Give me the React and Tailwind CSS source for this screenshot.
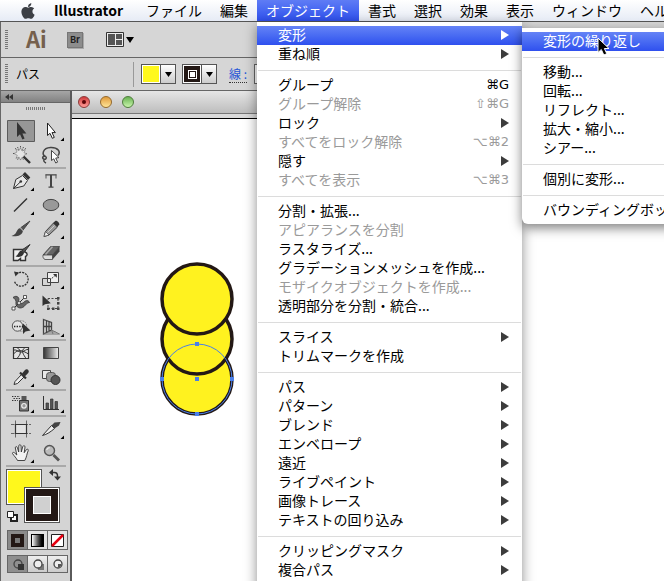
import { useState } from 'react'
import { FaApple } from 'react-icons/fa'

const MENU_TITLES = ['ファイル', '編集', 'オブジェクト', '書式', '選択', '効果', '表示', 'ウィンドウ', 'ヘルプ']

const OBJECT_MENU = [
  [
    { label: '変形', submenu: true },
    { label: '重ね順', submenu: true },
  ],
  [
    { label: 'グループ', shortcut: '⌘G' },
    { label: 'グループ解除', shortcut: '⇧⌘G', disabled: true },
    { label: 'ロック', submenu: true },
    { label: 'すべてをロック解除', shortcut: '⌥⌘2', disabled: true },
    { label: '隠す', submenu: true },
    { label: 'すべてを表示', shortcut: '⌥⌘3', disabled: true },
  ],
  [
    { label: '分割・拡張...' },
    { label: 'アピアランスを分割', disabled: true },
    { label: 'ラスタライズ...' },
    { label: 'グラデーションメッシュを作成...' },
    { label: 'モザイクオブジェクトを作成...', disabled: true },
    { label: '透明部分を分割・統合...' },
  ],
  [{ label: 'スライス', submenu: true }, { label: 'トリムマークを作成' }],
  [
    { label: 'パス', submenu: true },
    { label: 'パターン', submenu: true },
    { label: 'ブレンド', submenu: true },
    { label: 'エンベロープ', submenu: true },
    { label: '遠近', submenu: true },
    { label: 'ライブペイント', submenu: true },
    { label: '画像トレース', submenu: true },
    { label: 'テキストの回り込み', submenu: true },
  ],
  [
    { label: 'クリッピングマスク', submenu: true },
    { label: '複合パス', submenu: true },
  ],
]

const TRANSFORM_MENU = [
  [{ label: '変形の繰り返し' }],
  [
    { label: '移動...' },
    { label: '回転...' },
    { label: 'リフレクト...' },
    { label: '拡大・縮小...' },
    { label: 'シアー...' },
  ],
  [{ label: '個別に変形...' }],
  [{ label: 'バウンディングボックスの初期化' }],
]

const ARROW = 'M11 3V18L14 15.3L16.4 20.4L18.6 19.4L16.4 14.4H20.4Z'

// every drawing sits in a 30x24 cell
const TOOL_GROUPS = [
  [
    { name: '選択ツール', art: <path d={ARROW} fill="#333" /> },
    {
      name: 'ダイレクト選択ツール',
      more: true,
      art: <path d="M11.5 4V16.5L14 14.3L16.3 19.3L18.3 18.4L16 13.6H19.4Z" fill="#fff" stroke="#222" />,
    },
    {
      name: '自動選択ツール',
      art: (
        <>
          <path d="M14.5 3v15M7 10.5h15M9.2 5.2l10.6 10.6M19.8 5.2L9.2 15.8M11.5 4l6 13M17.5 4l-6 13" stroke="#555" strokeDasharray="1.5 1" />
          <path d="M14.5 5l1.6 3 3.2-1.4-1.3 3.2 3 1-3 1.6 1.2 3-3.1-1.2-1.6 2.9-1.4-3-3 1.2 1.2-3L8 10.5l3-1.4L9.8 6l3.2 1.6z" fill="#e4e4e4" stroke="#777" strokeWidth="0.6" />
          <path d="M17.5 13.5L24 20" stroke="#333" strokeWidth="2.4" />
        </>
      ),
    },
    {
      name: 'なげなわツール',
      art: (
        <>
          <path d="M9.5 13.5C5.5 11.5 6.5 5 14.5 4.5C22 4.2 25 9 22 12.5M9.5 13.5c-2.5-1-3.8 1.5-2 2.5s4-1 2-2.5zM8.5 16.5c-1.5 1-.5 2.5 1.5 3.5" stroke="#444" strokeWidth="1.5" />
          <path d="M15.5 7.5V17.5L17.8 15.8L19.7 20L21.6 19.1L19.7 15.1L23 14.6Z" fill="#fff" stroke="#333" strokeWidth="0.9" />
        </>
      ),
    },
  ],
  [
    {
      name: 'ペンツール',
      more: true,
      art: (
        <>
          <path d="M7.5 19.5L9.8 10.5L16.5 6.5L21.5 11.5L17.8 17L7.5 19.5Z" fill="#e6e6e6" stroke="#333" />
          <path d="M7.5 19.5L14.5 12.8" stroke="#333" />
          <circle cx="14.8" cy="12.5" r="1.3" fill="#333" />
          <path d="M16.5 5.5L19 3L24.3 8.5L22 11Z" fill="#333" />
        </>
      ),
    },
    {
      name: '文字ツール',
      more: true,
      art: (
        <>
          <path d="M9.5 5.9H20.5M15 6V18M12.5 18.2H17.500" stroke="#444" strokeWidth="1.200" />
          <path d="M15 6V18" stroke="#444" strokeWidth="2" />
          <path d="M10 5.500V9.500M20 5.500V9.500" stroke="#555" />
        </>
      ),
    },
    { name: '直線ツール', more: true, art: <path d="M8 18.5L21 5.5" stroke="#333" strokeWidth="1.4" /> },
    { name: '楕円形ツール', more: true, art: <ellipse cx="15" cy="12" rx="7.8" ry="5.6" fill="#999" stroke="#444" /> },
    {
      name: 'ブラシツール',
      art: (
        <>
          <path d="M24 4L15 10.5L17 13Z" fill="#555" stroke="#444" />
          <path d="M15 11C11.5 11 11 14.5 9.5 16.5C8.5 17.8 7 18.5 5.5 19C9 19.8 16.5 19.5 17 13.5Z" fill="#444" />
          <path d="M14.5 11L17.3 13.8" stroke="#aaa" strokeWidth="1.2" />
        </>
      ),
    },
    {
      name: '鉛筆ツール',
      more: true,
      art: (
        <>
          <path d="M8 19.5L9.5 14.5L17.5 6L21.5 10L13 18Z" fill="#999" stroke="#444" />
          <path d="M17 6L19.5 3.8C21 3.5 23.5 5.8 23.3 7.5L21.2 10Z" fill="#333" />
          <path d="M9.5 14.5L13 18L8 19.5Z" fill="#eee" stroke="#444" strokeWidth="0.7" />
          <path d="M11.5 15.5L18.5 8.5" stroke="#ccc" />
        </>
      ),
    },
    {
      name: '塗りブラシツール',
      art: (
        <>
          <path d="M7.5 8.5H19V11C22 12 21.5 14.5 19.5 15.5V19.5H14.5V17.5L12 19.5H7.5Z" fill="#eee" stroke="#333" strokeWidth="1.4" />
          <path d="M24 3.5L16 9L18 11.5Z" fill="#555" stroke="#333" />
          <path d="M16 9.5C12.5 9.5 13 13.5 9.5 15.5C13 16.5 17.5 15.8 18 11.5Z" fill="#333" />
        </>
      ),
    },
    {
      name: '消しゴムツール',
      more: true,
      art: (
        <>
          <path d="M7 14L14.5 5.5H23.5L16.5 14Z" fill="#666" stroke="#444" strokeWidth="0.8" />
          <path d="M7 14H16.5V18.5H9C7.5 18 6.5 16 7 14Z" fill="#ddd" stroke="#444" strokeWidth="0.8" />
          <path d="M16.5 14L23.5 5.5V10.5L16.5 18.5Z" fill="#444" />
          <path d="M9.5 13.500L16.5 5.800" stroke="#aaa" strokeWidth="1.500" />
        </>
      ),
    },
  ],
  [
    {
      name: '回転ツール',
      more: true,
      art: (
        <>
          <path d="M10.5 7A7 7 0 1 1 8.5 14.5" stroke="#333" strokeWidth="1.3" strokeDasharray="2 1" />
          <path d="M8 4.5L13 5.5L9.5 9.5Z" fill="#333" />
        </>
      ),
    },
    {
      name: '拡大・縮小ツール',
      more: true,
      art: (
        <>
          <path d="M11.5 5.5H22.5V15.5H11.5Z" fill="#eee" stroke="#444" />
          <path d="M6.5 11.5H14.5V18.5H6.5Z" stroke="#444" />
          <path d="M14 13L19 8.5" stroke="#333" strokeDasharray="1.5 1" />
          <path d="M17 7H20.8V10.8Z" fill="#333" />
        </>
      ),
    },
    {
      name: '線幅ツール',
      more: true,
      art: (
        <>
          <path d="M7 6.5C11 3.5 14 7 12.5 10C11.5 12.5 15 14 17.5 11.5C19.5 9.5 22 8.5 23.5 11.5C21 11.5 20 13.5 18 15.5C14.5 18.5 9.5 16.5 10 12C10.3 9.5 9.5 8 7 6.5Z" fill="#666" stroke="#444" />
          <path d="M7.5 17.5L19 6" stroke="#333" />
          <path d="M6 16H9V19H6ZM17.5 4.5H20.5V7.5H17.5Z" fill="#fff" stroke="#333" strokeWidth="0.8" />
          <circle cx="13" cy="12" r="1.5" fill="#fff" stroke="#333" strokeWidth="0.7" />
        </>
      ),
    },
    {
      name: '自由変形ツール',
      art: (
        <>
          <path d="M12 7.5H22V17.5H12Z" stroke="#444" strokeDasharray="2 1.5" />
          <path d="M21 6H23.5V8.5H21ZM21 16.5H23.5V19H21ZM11 16.5H13.5V19H11ZM16 16.5H18.5V19H16ZM21 11H23.5V13.5H21Z" fill="#444" />
          <path d="M6.5 4.5V15L9 13.3L14.8 12.2Z" fill="#333" />
        </>
      ),
    },
    {
      name: 'シェイプ形成ツール',
      more: true,
      art: (
        <>
          <path d="M14 6A5.2 5.2 0 1 1 14 16" fill="#ddd" stroke="#777" strokeDasharray="1.5 1" />
          <circle cx="11.5" cy="11" r="5.2" fill="#eee" fillOpacity="0.6" stroke="#555" />
          <path d="M8 11.5H18" stroke="#222" strokeWidth="1.4" strokeDasharray="1.4 1.2" />
          <path d="M17 8.5V19L19.5 16.5L24.5 15.5Z" fill="#333" />
        </>
      ),
    },
    {
      name: '遠近グリッドツール',
      more: true,
      art: (
        <>
          <path d="M7.5 4.5L15.5 7.5V15L7.5 19ZM7.5 11.5H15.5M10.5 5.8V17.5M13 6.8V16" stroke="#444" strokeWidth="1.3" />
          <path d="M15.5 15L23.5 19H7.5M12 17H19.5M15.5 15L17 19" stroke="#777" />
        </>
      ),
    },
  ],
  [
    {
      name: 'メッシュツール',
      art: (
        <>
          <path d="M7.5 6.5H22.5V17.5H7.5Z" fill="#e4e4e4" stroke="#333" strokeWidth="1.2" />
          <path d="M7.5 13C12 8 16 9 22.5 13M11 6.5C16 10 15 13 11 17.5M19 6.5C14 10 18 14 20 17.5M7.5 9C11 8 13 12 16 11S20 8 22.5 8.5" stroke="#333" />
        </>
      ),
    },
    {
      name: 'グラデーションツール',
      art: (
        <>
          <defs>
            <linearGradient id="tool-gradient">
              <stop offset="0" stopColor="#333" />
              <stop offset="1" stopColor="#eee" />
            </linearGradient>
          </defs>
          <path d="M7.5 6.5H22.5V17.5H7.5Z" fill="url(#tool-gradient)" stroke="#444" />
        </>
      ),
    },
    {
      name: 'スポイトツール',
      more: true,
      art: (
        <>
          <path d="M8 19.5L9 16.5L15.5 9.5L18 12L11.5 18.5Z" fill="#eee" stroke="#333" />
          <path d="M14 7.5L20 13.5" stroke="#333" strokeWidth="2.2" />
          <path d="M16 8.5L19 5C21 3 24 6 22.2 8L18.8 11.5Z" fill="#333" />
        </>
      ),
    },
    {
      name: 'ブレンドツール',
      art: (
        <>
          <path d="M6.5 5.5H14.5V13.5H6.5Z" fill="#e8e8e8" stroke="#444" />
          <rect x="10.5" y="7.5" width="9" height="9" rx="3" fill="#999" stroke="#555" />
          <circle cx="19.5" cy="15" r="4.5" fill="#555" stroke="#333" />
        </>
      ),
    },
  ],
  [
    {
      name: 'シンボルスプレーツール',
      more: true,
      art: (
        <>
          <path d="M6 5.5H14M7.5 7.5H14M6 9.5H12" stroke="#333" strokeDasharray="1.4 1.2" />
          <path d="M15.5 5H20.5V9H15.5Z" fill="#555" />
          <path d="M13.5 9.5H22.5V20H13.5Z" fill="#777" stroke="#333" />
          <circle cx="18" cy="14.8" r="2.3" fill="#999" stroke="#eee" strokeWidth="1.2" />
        </>
      ),
    },
    {
      name: '棒グラフツール',
      more: true,
      art: (
        <>
          <path d="M7.5 5V18.5H23" stroke="#333" />
          <path d="M10 12H12.5V18H10ZM14.5 8H17V18H14.5ZM19 10.5H21.5V18H19Z" fill="#555" stroke="#333" strokeWidth="0.7" />
        </>
      ),
    },
  ],
  [
    {
      name: 'アートボードツール',
      art: (
        <>
          <path d="M9.5 3.5V20.5M20.5 3.5V20.5M5 7.5H25M5 16.5H25" stroke="#666" strokeDasharray="3.5 1" />
          <path d="M9.5 7.5H20.5V16.5H9.5Z" fill="#e2e2e2" stroke="#333" strokeWidth="1.2" />
        </>
      ),
    },
    {
      name: 'スライスツール',
      more: true,
      art: (
        <>
          <path d="M6.5 18.5L15.5 8.5L18.5 11.5C15 14.5 11 17.5 6.5 18.5Z" fill="#eee" stroke="#333" />
          <path d="M15.5 8.5L18.5 5.5L24.5 5L23 8.5L18.5 11.5Z" fill="#444" />
        </>
      ),
    },
    {
      name: '手のひらツール',
      more: true,
      art: (
        <path
          d="M11.5 19.5C10.5 17 8 15 6.5 12.5C6.2 11.3 7.8 11 8.7 12L10.8 14L9.3 6.8C9.2 5.3 11 5.2 11.4 6.6L12.7 11L12.8 4.8C12.9 3.3 14.8 3.3 15 4.8L15.3 11L16.8 5.5C17.3 4.2 19.2 4.6 19 6L18.2 11.7L20.4 8.6C21.3 7.6 22.8 8.4 22.2 9.7C20.8 12.5 20.8 16 18.8 19.5Z"
          fill="#f2f2f2"
          stroke="#333"
          strokeWidth="0.9"
        />
      ),
    },
    {
      name: 'ズームツール',
      art: (
        <>
          <path d="M17.5 14L23 19.5" stroke="#555" strokeWidth="2.8" />
          <circle cx="13.5" cy="9.5" r="5" fill="#bbb" stroke="#555" strokeWidth="1.4" />
          <path d="M10.8 9C11 7.5 12.2 6.8 13.7 6.8" stroke="#fff" />
        </>
      ),
    },
  ],
]

const DRAW_MODES = [
  { name: '標準描画', art: <><circle cx="9" cy="7" r="4" fill="none" stroke="#444" strokeWidth="1.3" /><path d="M9 7H15V13H9Z" fill="#333" /></> },
  { name: '背面描画', art: <><path d="M9 7H15V13H9Z" fill="#777" /><circle cx="9" cy="7" r="4" fill="#eee" stroke="#444" strokeWidth="1.3" /></> },
  { name: '内側描画', art: <><circle cx="9" cy="7" r="4" fill="#eee" stroke="#444" strokeWidth="1.3" /><path d="M9 7H12.5A4 4 0 0 1 9 10.5Z" fill="#555" /></> },
]

function MenuPanel({ groups, active, children }) {
  return (
    <div role="menu" className="pt-1">
      {groups.map((group, index) => (
        <div key={index}>
          {index > 0 ? <div className="mx-px flex h-3 items-center"><hr className="w-full border-t border-[#dcdcdc]" /></div> : null}
          {group.map(item => {
            const selected = item.label === active
            return (
              <div key={item.label} className="relative">
                <button
                  type="button"
                  role="menuitem"
                  disabled={item.disabled}
                  className={`flex h-[19px] w-full items-center justify-between whitespace-nowrap pb-[2px] pl-[21px] pr-[13px] text-sm leading-[17px] ${
                    selected
                      ? 'bg-linear-to-b from-[#6583f6] to-[#2f4fee] text-white'
                      : item.disabled ? 'text-[#9a9a9a]' : 'text-black'
                  }`}
                >
                  <span>{item.label}</span>
                  {item.shortcut ? <span className="font-['DejaVu_Sans','Noto_Sans_CJK_JP',sans-serif] text-[13px]">{item.shortcut}</span> : null}
                  {item.submenu ? (
                    <svg width="8" height="10" className={selected ? 'fill-white' : 'fill-[#3c3c3c]'}>
                      <path d="M0 0L8 5L0 10Z" />
                    </svg>
                  ) : null}
                </button>
                {selected ? children : null}
              </div>
            )
          })}
        </div>
      ))}
    </div>
  )
}

function ObjectMenu() {
  return (
    <div className="absolute left-0 top-[22px] z-20 w-[265px] bg-white pb-10 shadow-[0_4px_12px_rgba(0,0,0,0.45)]">
      <MenuPanel groups={OBJECT_MENU} active="変形">
        <div className="absolute left-full top-[2px] z-30 w-[260px] rounded-b-md bg-white pb-1 shadow-[0_4px_12px_rgba(0,0,0,0.5)]">
          <MenuPanel groups={TRANSFORM_MENU} active="変形の繰り返し">
            <svg width="14" height="20" className="absolute left-[75px] top-[5px]">
              <path d="M1 1V15.5L4.3 12.5L6.8 18L9.8 16.7L7.4 11.5H12Z" fill="#000" stroke="#fff" />
            </svg>
          </MenuPanel>
        </div>
      </MenuPanel>
    </div>
  )
}

function MenuBar({ openMenu, onOpen }) {
  return (
    <nav className="flex h-[22px] shrink-0 items-start border-b border-[#555] bg-linear-to-b from-white to-[#e6ebf5] pl-[19px] text-sm leading-[21px]">
      <button type="button" aria-label="Apple" className="flex h-[21px] w-[26px] shrink-0 items-center">
        <FaApple size={18} color="#3c3f45" />
      </button>
      <button type="button" className="h-[21px] w-[92px] shrink-0 px-[9px] text-left font-bold">Illustrator</button>
      {MENU_TITLES.map(title => {
        const open = title === openMenu
        return (
          <div key={title} className="relative shrink-0">
            <button
              type="button"
              className={`h-[21px] whitespace-nowrap px-[9px] ${open ? 'bg-linear-to-b from-[#5f7cf5] to-[#2f4fee] text-white' : 'text-black'}`}
              onClick={() => onOpen(open ? null : title)}
            >
              {title}
            </button>
            {open && title === 'オブジェクト' ? <ObjectMenu /> : null}
          </div>
        )
      })}
    </nav>
  )
}

function Grip() {
  return <div className="h-5 w-[3px] shrink-0 bg-[repeating-linear-gradient(to_bottom,#777_0_1px,transparent_1px_2px)]" />
}

function SwatchPicker({ label, children }) {
  return (
    <button type="button" aria-label={label} className="flex h-5 w-[35px] border border-[#555] bg-linear-to-b from-white to-[#ccc]">
      {children}
      <span className="flex h-full flex-1 items-center justify-center border-l border-[#555]">
        <svg width="7" height="5"><path d="M0 0H7L3.5 5Z" /></svg>
      </span>
    </button>
  )
}

function ApplicationBar() {
  return (
    <header className="flex h-9 shrink-0 items-center border-b border-l border-[#666] bg-[#d6d6d6] pl-1">
      <Grip />
      <span className="ml-[18px] w-[41px] pb-1 text-[22px] font-bold leading-6 text-[#75604d]">Ai</span>
      <button type="button" className="h-4 w-4 border border-[#777] bg-[#8d8d8d] text-[9px] font-bold leading-[14px] text-[#222] shadow-[1px_1px_0_#aaa]">Br</button>
      <button type="button" aria-label="ドキュメントレイアウト" className="ml-[23px] flex items-center gap-[2px]">
        <svg width="18" height="15">
          <path d="M.5.5H17.5V14.5H.5Z" fill="#eee" stroke="#333" />
          <path d="M2 2H9V13H2ZM10 2H16V7H10ZM10 8H16V13H10Z" fill="#555" />
        </svg>
        <svg width="8" height="6"><path d="M0 0H8L4 6Z" /></svg>
      </button>
    </header>
  )
}

function ControlBar() {
  return (
    <div className="flex h-[33px] shrink-0 items-center border-b border-l border-[#666] bg-[#d6d6d6] pl-1 text-xs">
      <Grip />
      <span className="ml-2 w-[117px]">パス</span>
      <div className="h-[25px] w-[8px] shrink-0 border-l border-[#999]" />
      <SwatchPicker label="塗り">
        <span className="h-full w-[18px] border border-white bg-[#fff81c]" />
      </SwatchPicker>
      <div className="ml-[6px] flex">
        <SwatchPicker label="線">
          <span className="flex h-full w-[18px] items-center justify-center border border-white bg-[#231815]">
            <span className="flex size-[9px] items-center justify-center border border-white">
              <span className="size-[5px] bg-white" />
            </span>
          </span>
        </SwatchPicker>
      </div>
      <label htmlFor="stroke-width" className="ml-3 w-[25px] whitespace-nowrap">
        <a href="#stroke" className="border-b border-dotted border-[#333] text-[#2455d6]">線 :</a>
      </label>
      <input id="stroke-width" className="h-5 w-10 border border-[#666] bg-white" />
    </div>
  )
}

function ToolButton({ tool, selected, onSelect }) {
  return (
    <button
      type="button"
      aria-label={tool.name}
      className="flex h-6 w-[30px] items-center justify-center"
      onClick={onSelect}
    >
      <svg width="30" height="24" fill="none">
        {selected ? <path d="M1.5 1.5H28.5V22.5H1.5Z" fill="#979797" stroke="#5c5c5c" /> : null}
        {tool.art}
        {tool.more ? <path d="M28 18.5V22H24.5Z" fill="#000" /> : null}
      </svg>
    </button>
  )
}

function ToolPanel() {
  const [tool, setTool] = useState('選択ツール')

  return (
    <aside className="flex w-[72px] shrink-0 flex-col border-l border-r-2 border-l-[#666] border-r-[#5a5a5a] bg-[#d4d4d4]">
      <button type="button" aria-label="パネルを閉じる" className="flex h-3 shrink-0 items-center border-b border-[#666] bg-linear-to-b from-[#a6a6a6] to-[#828282] pl-1">
        <svg width="8" height="6"><path d="M4 0V6L0 3ZM8 0V6L4 3Z" fill="#333" /></svg>
      </button>
      <div className="mx-auto mt-1 h-[3px] w-[19px] shrink-0 bg-[repeating-linear-gradient(to_right,#777_0_1px,transparent_1px_2px)]" />
      <div className="mt-[9px] pl-[5px]">
        {TOOL_GROUPS.map((group, index) => (
          <div key={index} className="grid w-[60px] grid-cols-2 border-b-2 border-[#a9a9a9]">
            {group.map(item => (
              <ToolButton key={item.name} tool={item} selected={item.name === tool} onSelect={() => setTool(item.name)} />
            ))}
          </div>
        ))}
      </div>

      <div className="relative ml-[5px] mt-[2px] h-[61px] w-[60px] shrink-0">
        <button type="button" aria-label="塗り" className="absolute left-0 top-0 size-9 border border-[#555] bg-white p-px">
          <span className="block size-full bg-[#fff81c]" />
        </button>
        <button type="button" aria-label="線" className="absolute left-[18px] top-[18px] size-9 border border-[#555] bg-white p-px">
          <span className="flex size-full items-center justify-center bg-[#231815]">
            <span className="size-[18px] border border-white bg-[#d0d0d0]" />
          </span>
        </button>
        <button type="button" aria-label="塗りと線を入れ替え" className="absolute left-[43px] top-0">
          <svg width="12" height="12" fill="none">
            <path d="M3 3.5H5.5Q8.5 3.5 8.5 7V8" stroke="#333" strokeWidth="1.5" />
            <path d="M4 0V7L0 3.5ZM5 7.5H12L8.5 11.5Z" fill="#333" />
          </svg>
        </button>
        <button type="button" aria-label="初期設定の塗りと線" className="absolute left-[1px] top-[42px]">
          <svg width="11" height="11">
            <path d="M4 4H10V10H4Z" fill="#fff" stroke="#222" strokeWidth="2" />
            <path d="M.5.5H6.5V6.5H.5Z" fill="#fff" stroke="#222" />
          </svg>
        </button>
      </div>

      <div className="ml-[6px] flex h-5 w-[61px] shrink-0 divide-x divide-[#666] border border-[#666] bg-[#e2e2e2]">
        <button type="button" aria-label="カラー" className="flex flex-1 items-center justify-center bg-[#8a8a8a]">
          <span className="flex size-[13px] items-center justify-center bg-[#231815]"><span className="size-[5px] bg-[#777]" /></span>
        </button>
        <button type="button" aria-label="グラデーション" className="flex flex-1 items-center justify-center">
          <span className="size-[13px] border border-black bg-linear-to-r from-white to-black" />
        </button>
        <button type="button" aria-label="なし" className="flex flex-1 items-center justify-center">
          <svg width="13" height="13">
            <path d="M.5.5H12.5V12.5H.5Z" fill="#fff" stroke="#222" />
            <path d="M1 12L12 1" stroke="#e60012" strokeWidth="2.5" />
          </svg>
        </button>
      </div>

      <div className="ml-[6px] mt-[5px] flex h-[18px] w-[61px] shrink-0 divide-x divide-[#666] border border-[#666] bg-linear-to-b from-[#eee] to-[#ccc]">
        {DRAW_MODES.map((mode, index) => (
          <button
            key={mode.name}
            type="button"
            aria-label={mode.name}
            className={`flex flex-1 items-center justify-center ${index === 0 ? 'bg-[#8f8f8f]' : ''}`}
          >
            <svg width="18" height="15">{mode.art}</svg>
          </button>
        ))}
      </div>
    </aside>
  )
}

function Artwork() {
  const anchors = [[40, 85], [5, 120], [75, 120], [40, 155], [40, 120]]

  return (
    <svg width="80" height="160" className="ml-[85px] mt-[140px]">
      {[120, 80, 40].map(cy => (
        <circle key={cy} cx="40" cy={cy} r="35" fill="#fff21f" stroke="#231815" strokeWidth="3.5" />
      ))}
      <circle cx="40" cy="120" r="35" fill="none" stroke="#4a7fe8" />
      {anchors.map(([x, y]) => (
        <rect key={`${x}-${y}`} x={x - 2} y={y - 2} width="4" height="4" fill="#4a7fe8" />
      ))}
    </svg>
  )
}

function DocumentWindow() {
  return (
    <main className="flex min-w-0 flex-1 flex-col bg-white">
      <div className="flex h-[23px] shrink-0 items-center gap-[10px] border-b border-[#777] bg-linear-to-b from-[#e6e6e6] to-[#bdbdbd] pl-[6px]">
        <button type="button" aria-label="閉じる" className="flex size-3 items-center justify-center rounded-full border border-[#8d3a38] bg-linear-to-b from-[#d0383c] to-[#ff9b98]">
          <span className="size-1 rounded-full bg-[#5c0508]" />
        </button>
        <button type="button" aria-label="しまう" className="size-3 rounded-full border border-[#94692c] bg-linear-to-b from-[#e09a36] to-[#ffe596]" />
        <button type="button" aria-label="拡大" className="size-3 rounded-full border border-[#4e7d3c] bg-linear-to-b from-[#69b352] to-[#c8f5ac]" />
      </div>
      <div className="h-[5px] shrink-0 border-b border-black bg-[#dadada]" />
      <Artwork />
    </main>
  )
}

export default function App() {
  const [openMenu, setOpenMenu] = useState('オブジェクト')

  return (
    <div className="flex h-screen flex-col overflow-hidden bg-white font-['Noto_Sans_CJK_JP',sans-serif] text-black">
      <MenuBar openMenu={openMenu} onOpen={setOpenMenu} />
      <ApplicationBar />
      <ControlBar />
      <div className="flex min-h-0 flex-1">
        <ToolPanel />
        <DocumentWindow />
      </div>
    </div>
  )
}
